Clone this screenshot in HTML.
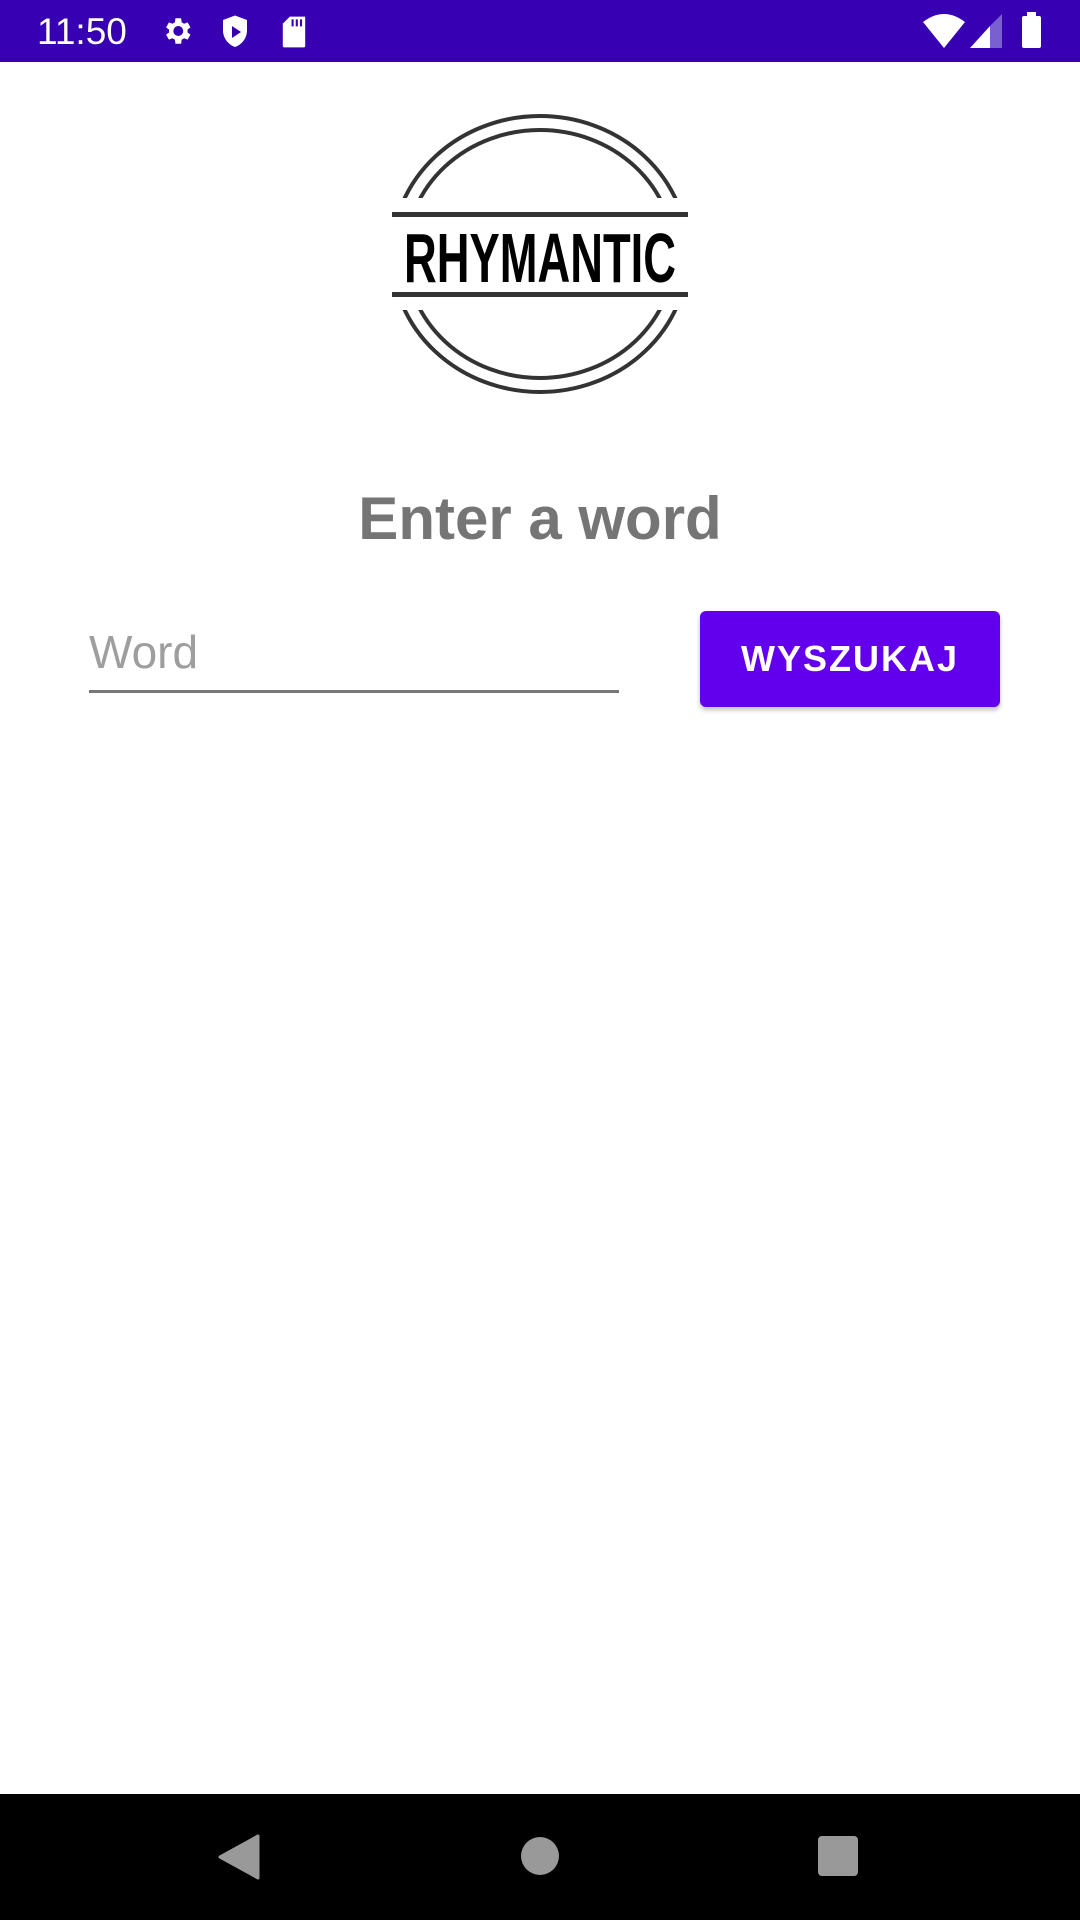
<!DOCTYPE html>
<html><head><meta charset="utf-8"><style>
html,body{margin:0;width:1080px;height:1920px;background:#fff;position:relative;overflow:hidden;font-family:"Liberation Sans",sans-serif}
.sb{position:absolute;left:0;top:0;width:1080px;height:62px;background:#3700B3}
.nav{position:absolute;left:0;top:1794px;width:1080px;height:126px;background:#000}
</style></head><body>
<div class="sb">
<div style="position:absolute;left:37px;top:11px;color:#fff;font-size:37px;">11:50</div>
<svg style="position:absolute;left:160px;top:14px" width="34" height="34" viewBox="0 0 24 24"><path fill="#fff" d="M19.4 13a7.5 7.5 0 000-2l2.1-1.6-2-3.5-2.5 1a7 7 0 00-1.7-1L14.9 3h-4l-.4 2.9a7 7 0 00-1.7 1l-2.5-1-2 3.5L6.4 11a7.5 7.5 0 000 2l-2.1 1.6 2 3.5 2.5-1a7 7 0 001.7 1l.4 2.9h4l.4-2.9a7 7 0 001.7-1l2.5 1 2-3.5zM12.9 15.5a3.5 3.5 0 110-7 3.5 3.5 0 010 7z"/></svg>
<svg style="position:absolute;left:220px;top:14px" width="30" height="36" viewBox="0 0 20 24"><path fill="#fff" d="M10 1L2 4v7c0 5 3.5 9.5 8 11 4.5-1.5 8-6 8-11V4z"/><path fill="#3700B3" d="M8 8v8l6-4z"/></svg>
<svg style="position:absolute;left:280px;top:14px" width="28" height="36" viewBox="0 0 20 24"><path fill="#fff" d="M7 1h11v21a1 1 0 01-1 1H3a1 1 0 01-1-1V6z"/><path stroke="#3700B3" stroke-width="1.5" d="M9 3v5M12 3v5M15 3v5"/></svg>
<svg style="position:absolute;left:923px;top:14px" width="42" height="34" viewBox="0 0 42 34"><path fill="#fff" d="M0 8Q21-8 42 8L21 34z"/></svg>
<svg style="position:absolute;left:970px;top:14px" width="32" height="34" viewBox="0 0 32 34"><path fill="#fff" d="M0 34L20 12V34z"/><path fill="#7a5fd0" d="M20 12L32 0V34H20z"/></svg>
<div style="position:absolute;left:1022px;top:16px;width:19px;height:32px;background:#fff;border-radius:2px"></div>
<div style="position:absolute;left:1027px;top:12px;width:9px;height:5px;background:#fff"></div>
</div>

<svg style="position:absolute;left:380px;top:105px" width="320" height="300" viewBox="0 0 320 300">
<g fill="none" stroke="#333" stroke-width="4">
<ellipse cx="160" cy="149" rx="148" ry="138"/>
<ellipse cx="160" cy="149" rx="134" ry="124"/>
</g>
<rect x="0" y="93" width="320" height="112" fill="#fff"/>
<rect x="12" y="107" width="296" height="5" fill="#333"/>
<rect x="12" y="187" width="296" height="5" fill="#333"/>
<text x="160" y="177" text-anchor="middle" font-family="Liberation Sans, sans-serif" font-weight="bold" font-size="70" fill="#000" textLength="272" lengthAdjust="spacingAndGlyphs">RHYMANTIC</text>
</svg>

<div style="position:absolute;left:0;width:1080px;top:484px;text-align:center;font-size:60px;font-weight:bold;color:#757575">Enter a word</div>

<div style="position:absolute;left:89px;top:625px;font-size:46px;color:#9e9e9e">Word</div>
<div style="position:absolute;left:89px;top:690px;width:530px;height:3px;background:#777"></div>

<div style="position:absolute;left:700px;top:611px;width:300px;height:96px;background:#6200EE;border-radius:6px;box-shadow:0 3px 5px rgba(0,0,0,.25);color:#fff;font-size:36px;font-weight:bold;letter-spacing:2px;text-align:center;line-height:96px">WYSZUKAJ</div>

<div class="nav">
<svg style="position:absolute;left:218px;top:40px" width="42" height="46" viewBox="0 0 42 46"><path fill="#999" d="M2 23L40 2V44z" stroke="#999" stroke-linejoin="round" stroke-width="3"/></svg>
<div style="position:absolute;left:521px;top:43px;width:38px;height:38px;border-radius:50%;background:#999"></div>
<div style="position:absolute;left:818px;top:42px;width:40px;height:40px;border-radius:4px;background:#999"></div>
</div>
</body></html>
